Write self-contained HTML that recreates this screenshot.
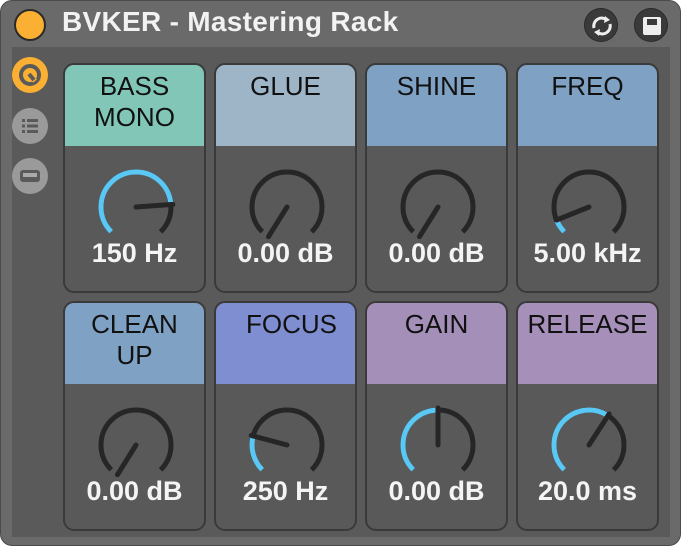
<!DOCTYPE html>
<html><head><meta charset="utf-8"><style>
*{margin:0;padding:0;box-sizing:border-box}
body{width:682px;height:547px;background:#fff;font-family:"Liberation Sans",sans-serif;position:relative;overflow:hidden}
.frame{position:absolute;left:0;top:0;width:681px;height:546px;background:#6a6a6a;border-radius:12px;border:1px solid #4a4a4a}
.body{position:absolute;left:12px;top:47px;width:658px;height:490px;background:#5a5a5a}
.title{position:absolute;left:62px;top:6px;color:#f2f2f2;font-weight:bold;font-size:28px;letter-spacing:0.3px}
.dot{position:absolute;left:14px;top:9px;width:32px;height:32px;border-radius:50%;background:#fbb034;border:2px solid #2a2a2a}
.tb{position:absolute;top:8px;width:34px;height:34px;border-radius:50%;background:#3a3a3a;border:1px solid #2a2a2a}
.side{position:absolute;left:12px;width:36px;height:36px;border-radius:50%;background:#9a9a9a}
.p{position:absolute;width:143px;height:230px;border:2px solid #3a3a3a;border-radius:11px;background:#595959;overflow:hidden}
.h{height:81px;text-align:center;color:#111;font-size:26px;line-height:31px;padding-top:6px}
.p svg{position:absolute;left:26px;top:97px}
.v{position:absolute;left:0;right:0;top:173px;text-align:center;color:#f4f4f4;font-weight:bold;font-size:27px}
</style></head><body>
<div class="frame"></div>
<div class="body"></div>
<div class="dot"></div>
<div class="title">BVKER - Mastering Rack</div>
<div class="tb" style="left:584px"><svg width="34" height="34" viewBox="0 0 34 34"><path d="M9 19 A8 8 0 0 1 22 11" stroke="#eee" stroke-width="3" fill="none"/><path d="M20 7 L25 11 L19 14Z" fill="#eee"/><path d="M25 15 A8 8 0 0 1 12 23" stroke="#eee" stroke-width="3" fill="none"/><path d="M14 27 L9 23 L15 20Z" fill="#eee"/></svg></div>
<div class="tb" style="left:634px"><svg width="34" height="34" viewBox="0 0 34 34"><rect x="8" y="8" width="18" height="18" rx="2" fill="#eee"/><rect x="12" y="10" width="10" height="6" fill="#3a3a3a"/></svg></div>
<div class="side" style="top:57px;background:#fbb034"><svg width="36" height="36"><circle cx="18" cy="18" r="9" stroke="#5a5a5a" stroke-width="4" fill="none"/><path d="M18 18 L23 24" stroke="#fbb034" stroke-width="5"/><path d="M17 17 L22 23" stroke="#5a5a5a" stroke-width="4"/></svg></div>
<div class="side" style="top:108px"><svg width="36" height="36"><g fill="#5a5a5a"><rect x="10" y="11" width="3" height="3"/><rect x="15" y="11" width="11" height="3"/><rect x="10" y="16.5" width="3" height="3"/><rect x="15" y="16.5" width="11" height="3"/><rect x="10" y="22" width="3" height="3"/><rect x="15" y="22" width="11" height="3"/></g></svg></div>
<div class="side" style="top:158px"><svg width="36" height="36"><rect x="8" y="12" width="20" height="12" rx="3" fill="#5a5a5a"/><rect x="11" y="15" width="14" height="4" fill="#aaa"/></svg></div>

<div class="p" style="left:63px;top:63px"><div class="h" style="background:#82c6b8">BASS<br>MONO</div>
<svg width="90" height="90"><circle cx="45" cy="45" r="35" fill="none" stroke="#262626" stroke-width="5" stroke-dasharray="164.9 300" transform="rotate(135 45 45)"/><circle cx="45" cy="45" r="35" fill="none" stroke="#5ac8f5" stroke-width="5" stroke-dasharray="134 300" transform="rotate(135 45 45)"/><line x1="45" y1="45" x2="45" y2="8" stroke="#262626" stroke-width="5" stroke-linecap="round" transform="rotate(86 45 45)"/></svg>
<div class="v">150 Hz</div></div>

<div class="p" style="left:214px;top:63px"><div class="h" style="background:#9eb5c8">GLUE</div>
<svg width="90" height="90"><circle cx="45" cy="45" r="35" fill="none" stroke="#262626" stroke-width="5" stroke-dasharray="164.9 300" transform="rotate(135 45 45)"/><line x1="45" y1="45" x2="45" y2="10" stroke="#262626" stroke-width="5" stroke-linecap="round" transform="rotate(-148 45 45)"/></svg>
<div class="v">0.00 dB</div></div>

<div class="p" style="left:365px;top:63px"><div class="h" style="background:#7fa1c4">SHINE</div>
<svg width="90" height="90"><circle cx="45" cy="45" r="35" fill="none" stroke="#262626" stroke-width="5" stroke-dasharray="164.9 300" transform="rotate(135 45 45)"/><line x1="45" y1="45" x2="45" y2="10" stroke="#262626" stroke-width="5" stroke-linecap="round" transform="rotate(-148 45 45)"/></svg>
<div class="v">0.00 dB</div></div>

<div class="p" style="left:516px;top:63px"><div class="h" style="background:#7fa1c4">FREQ</div>
<svg width="90" height="90"><circle cx="45" cy="45" r="35" fill="none" stroke="#262626" stroke-width="5" stroke-dasharray="164.9 300" transform="rotate(135 45 45)"/><circle cx="45" cy="45" r="35" fill="none" stroke="#5ac8f5" stroke-width="5" stroke-dasharray="13 300" transform="rotate(135 45 45)"/><line x1="45" y1="45" x2="45" y2="10" stroke="#262626" stroke-width="5" stroke-linecap="round" transform="rotate(-112 45 45)"/></svg>
<div class="v">5.00 kHz</div></div>

<div class="p" style="left:63px;top:301px"><div class="h" style="background:#7fa1c4">CLEAN<br>UP</div>
<svg width="90" height="90"><circle cx="45" cy="45" r="35" fill="none" stroke="#262626" stroke-width="5" stroke-dasharray="164.9 300" transform="rotate(135 45 45)"/><line x1="45" y1="45" x2="45" y2="10" stroke="#262626" stroke-width="5" stroke-linecap="round" transform="rotate(-148 45 45)"/></svg>
<div class="v">0.00 dB</div></div>

<div class="p" style="left:214px;top:301px"><div class="h" style="background:#7e8ed0;padding-left:12px">FOCUS</div>
<svg width="90" height="90"><circle cx="45" cy="45" r="35" fill="none" stroke="#262626" stroke-width="5" stroke-dasharray="164.9 300" transform="rotate(135 45 45)"/><circle cx="45" cy="45" r="35" fill="none" stroke="#5ac8f5" stroke-width="5" stroke-dasharray="36 300" transform="rotate(135 45 45)"/><line x1="45" y1="45" x2="45" y2="8" stroke="#262626" stroke-width="5" stroke-linecap="round" transform="rotate(-75 45 45)"/></svg>
<div class="v">250 Hz</div></div>

<div class="p" style="left:365px;top:301px"><div class="h" style="background:#a48fb8">GAIN</div>
<svg width="90" height="90"><circle cx="45" cy="45" r="35" fill="none" stroke="#262626" stroke-width="5" stroke-dasharray="164.9 300" transform="rotate(135 45 45)"/><circle cx="45" cy="45" r="35" fill="none" stroke="#5ac8f5" stroke-width="5" stroke-dasharray="80 300" transform="rotate(135 45 45)"/><line x1="45" y1="45" x2="45" y2="8" stroke="#262626" stroke-width="5" stroke-linecap="round"/></svg>
<div class="v">0.00 dB</div></div>

<div class="p" style="left:516px;top:301px"><div class="h" style="background:#a68fb8">RELEASE</div>
<svg width="90" height="90"><circle cx="45" cy="45" r="35" fill="none" stroke="#262626" stroke-width="5" stroke-dasharray="164.9 300" transform="rotate(135 45 45)"/><circle cx="45" cy="45" r="35" fill="none" stroke="#5ac8f5" stroke-width="5" stroke-dasharray="100 300" transform="rotate(135 45 45)"/><line x1="45" y1="45" x2="45" y2="8" stroke="#262626" stroke-width="5" stroke-linecap="round" transform="rotate(33 45 45)"/></svg>
<div class="v">20.0 ms</div></div>
</body></html>
